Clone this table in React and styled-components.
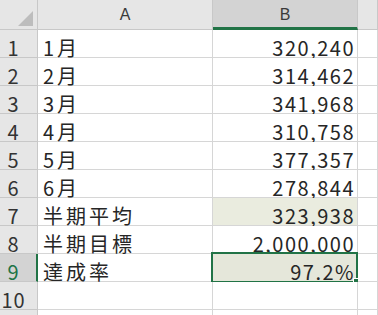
import React from "react";
import styled, { createGlobalStyle } from "styled-components";

const Global = createGlobalStyle`
  html, body { margin: 0; padding: 0; background: #ffffff; overflow: hidden; }
  body { font-family: "Noto Sans CJK JP", "Noto Sans", sans-serif; }
`;

const Sheet = styled.div`
  display: grid;
  grid-template-columns: 38px 175px 145px 1fr;
  grid-template-rows: 30px repeat(11, 28px);
  width: 378px;
  height: 315px;
  overflow: hidden;
  background: #ffffff;
`;

const Corner = styled.div`
  background: #e6e6e6;
  border-right: 1px solid #c8c8c8;
  border-bottom: 1px solid #c8c8c8;
  box-sizing: border-box;
  display: flex;
  align-items: flex-end;
  justify-content: flex-end;
  padding: 0 4px 3px 0;
`;

const ColHead = styled.div`
  box-sizing: border-box;
  background: ${(p) => (p.$active ? "#d3d3d3" : "#e6e6e6")};
  border-right: 1px solid #c8c8c8;
  border-bottom: ${(p) => (p.$active ? "3px solid #217346" : "1px solid #c8c8c8")};
  display: flex;
  align-items: center;
  justify-content: center;
  font-family: "Liberation Sans", "Noto Sans", sans-serif;
  font-size: 16px;
  color: #3a3a3a;
  padding-top: ${(p) => (p.$active ? "2px" : "0")};
`;

const RowHead = styled.div`
  box-sizing: border-box;
  background: ${(p) => (p.$active ? "#d3d3d3" : "#e6e6e6")};
  border-right: ${(p) => (p.$active ? "2px solid #217346" : "1px solid #c8c8c8")};
  border-bottom: 1px solid #c8c8c8;
  display: flex;
  align-items: flex-end;
  justify-content: center;
  padding: 0 ${(p) => (p.$active ? "9px" : "10px")} 0 0;
  font-size: 20px;
  line-height: 18px;
  letter-spacing: 1px;
  color: ${(p) => (p.$active ? "#217346" : "#333333")};
`;

const Cell = styled.div`
  position: relative;
  box-sizing: border-box;
  background: ${(p) => p.$fill || "#ffffff"};
  border-right: 1px solid #d6d6d6;
  border-bottom: 1px solid #d6d6d6;
  display: flex;
  align-items: flex-end;
  justify-content: ${(p) => (p.$num ? "flex-end" : "flex-start")};
  padding: ${(p) => (p.$num ? "0 2px 0 5px" : "0 4px 0 5px")};
  font-size: 20px;
  line-height: 18px;
  letter-spacing: ${(p) => (p.$num ? "1.5px" : "3px")};
  color: #262626;
  white-space: nowrap;
`;

const Selection = styled.div`
  position: absolute;
  top: -2px;
  left: -2px;
  right: -1px;
  bottom: -2px;
  border: 2px solid #217346;
  pointer-events: none;
`;

const Handle = styled.div`
  position: absolute;
  right: -5px;
  bottom: -5px;
  width: 6px;
  height: 6px;
  background: #217346;
  border: 1px solid #ffffff;
`;

const rows = [
  ["1月", "320,240"],
  ["2月", "314,462"],
  ["3月", "341,968"],
  ["4月", "310,758"],
  ["5月", "377,357"],
  ["6月", "278,844"],
  ["半期平均", "323,938", "#eaecdf"],
  ["半期目標", "2,000,000"],
  ["達成率", "97.2%", "#e5e7da", true],
  ["", ""],
  ["", ""],
];

export default function App() {
  return (
    <>
      <Global />
      <Sheet>
        <Corner>
          <svg width="15" height="15" viewBox="0 0 15 15">
            <polygon points="15,0 15,15 0,15" fill="#bdbdbd" />
          </svg>
        </Corner>
        <ColHead>A</ColHead>
        <ColHead $active>B</ColHead>
        <ColHead />
        {rows.map(([a, b, fill, sel], i) => (
          <React.Fragment key={i}>
            <RowHead $active={sel}>{i < 10 ? i + 1 : ""}</RowHead>
            <Cell>{a}</Cell>
            <Cell $num $fill={fill}>
              {b}
              {sel && (
                <Selection>
                  <Handle />
                </Selection>
              )}
            </Cell>
            <Cell />
          </React.Fragment>
        ))}
      </Sheet>
    </>
  );
}
